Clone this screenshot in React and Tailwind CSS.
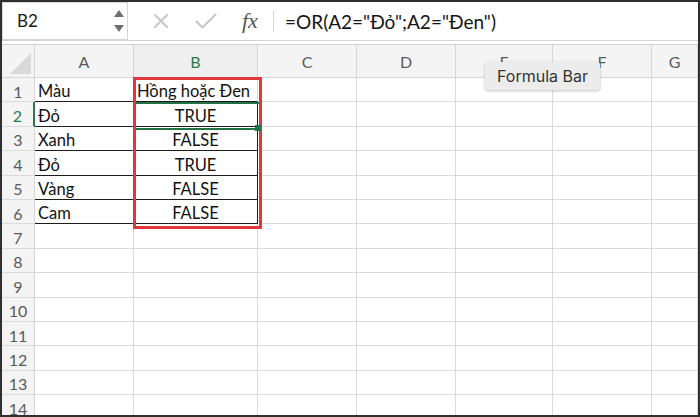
import React from 'react'

const COLS = ['A', 'B', 'C', 'D', 'E', 'F', 'G']

// row data: [A, B]
const DATA = [
  ['Màu', 'Hồng hoặc Đen'],
  ['Đỏ', 'TRUE'],
  ['Xanh', 'FALSE'],
  ['Đỏ', 'TRUE'],
  ['Vàng', 'FALSE'],
  ['Cam', 'FALSE'],
]

const ROWS = Array.from({ length: 14 }, (_, i) => i + 1)

const Stepper = () => (
  <svg width="10" height="24" viewBox="0 0 10 24">
    <path d="M5 1 L10 8 L0 8 Z" fill="#6f6f6f" />
    <path d="M0 16 L10 16 L5 23 Z" fill="#6f6f6f" />
  </svg>
)

const CancelIcon = () => (
  <svg width="16" height="16" viewBox="0 0 16 16" fill="none" stroke="#c9c9c9" strokeWidth="2.2" strokeLinecap="round">
    <path d="M2 2 L14 14 M14 2 L2 14" />
  </svg>
)

const CheckIcon = () => (
  <svg width="22" height="16" viewBox="0 0 22 16" fill="none" stroke="#c9c9c9" strokeWidth="2.2" strokeLinecap="round" strokeLinejoin="round">
    <path d="M1.5 8.5 L7.5 14.5 L20.5 1.5" />
  </svg>
)

function Cell({ row, col }) {
  const inData = row <= 6 && col <= 1
  const value = inData ? DATA[row - 1][col] : ''
  // thin black borders around A2:B6 (plus the bottom of row 1)
  const darkRight = row >= 2 && row <= 6 && col <= 1
  const darkBottom = row >= 1 && row <= 6 && col <= 1
  const center = col === 1 && row > 1
  return (
    <div
      className={`border-r border-b flex items-center pt-[4px] text-[16.5px] text-[#111] overflow-hidden whitespace-nowrap ${
        darkRight ? 'border-r-[#1c1c1c]' : 'border-r-[#dadada]'
      } ${darkBottom ? 'border-b-[#1c1c1c]' : 'border-b-[#dadada]'} ${center ? 'justify-center' : 'pl-[3px]'}`}
    >
      {value}
    </div>
  )
}

export default function App() {
  return (
    <div className="relative w-[700px] h-[417px] overflow-hidden border-2 border-[#2f2f2f] bg-white font-['Lato',sans-serif]">
      {/* Formula bar */}
      <div className="flex items-center h-[39px] border-b border-[#d2d2d2]">
        <div className="flex items-center justify-between w-[126px] h-full border border-[#d6d6d6] pl-[14px] pr-[3px]">
          <span className="text-[17px] text-[#1a1a1a]">B2</span>
          <Stepper />
        </div>
        <span className="ml-[25px] flex"><CancelIcon /></span>
        <span className="ml-[26px] flex"><CheckIcon /></span>
        <span className="ml-[25px] w-[22px] font-['Liberation_Serif',serif] italic text-[22px] leading-none text-[#555]">fx</span>
        <span className="ml-[9px] w-px h-[22px] bg-[#d8d8d8]" />
        <span className="ml-[11px] pt-[3px] text-[19px] text-[#151515]">=OR(A2="Đỏ";A2="Đen")</span>
      </div>
      <div className="h-[3px]" />

      {/* Grid */}
      <div className="grid border-t border-[#d2d2d2] grid-cols-[33px_99px_124px_99px_99px_97px_99px_1fr] grid-rows-[33px_repeat(14,24.4px)]">
        {/* corner */}
        <div className="relative bg-[#f4f4f4] border-r border-b border-[#d6d6d6]">
          <svg className="absolute left-0 top-0" width="33" height="33" viewBox="0 0 33 33">
            <path d="M29 8 L29 29 L8 29 Z" fill="#d9d9d9" />
          </svg>
        </div>
        {COLS.map(c => (
          <div
            key={c}
            className={`flex items-center justify-center pt-[2px] border-r border-b border-[#d6d6d6] text-[16px] ${
              c === 'B' ? 'bg-[#efefef] text-[#2c7a4b]' : 'bg-[#f4f4f4] text-[#5a5a5a]'
            }`}
          >
            {c}
          </div>
        ))}
        {ROWS.map(r => (
          <React.Fragment key={r}>
            <div
              className={`flex items-center justify-center pt-[4px] bg-[#f4f4f4] border-b border-b-[#dadada] border-r text-[16px] ${
                r === 2 ? 'text-[#2c7a4b] border-r-[#2c7a4b] border-r-2' : 'text-[#5a5a5a] border-r-[#d6d6d6]'
              }`}
            >
              {r}
            </div>
            {COLS.map((c, ci) => (
              <Cell key={c} row={r} col={ci} />
            ))}
          </React.Fragment>
        ))}
      </div>

      {/* active cell B2 */}
      <div className="absolute left-[133px] top-[100px] w-[124px] h-[28px] border-y-2 border-[#217346]" />
      {/* red highlight around B1:B6 */}
      <div className="absolute left-[131px] top-[75px] w-[129px] h-[152px] border-[3px] border-[#e0363c]" />
      {/* fill handle */}
      <div className="absolute left-[253px] top-[123px] w-[6px] h-[6px] bg-[#217346]" />

      {/* tooltip */}
      <div className="absolute left-[483px] top-[60px] w-[115px] h-[28px] flex items-center justify-center rounded-[3px] bg-[#ececec] shadow-[0_1px_3px_rgba(0,0,0,0.25)] font-['Inter',sans-serif] text-[16px] text-[#333]">
        Formula Bar
      </div>
    </div>
  )
}
